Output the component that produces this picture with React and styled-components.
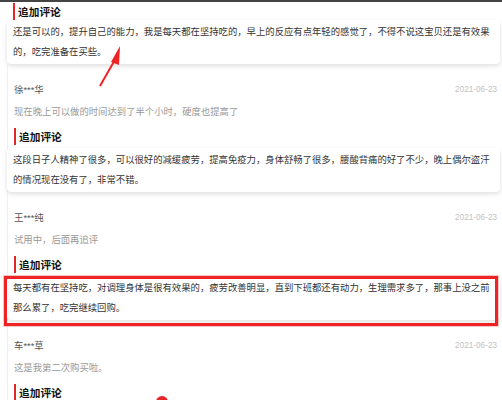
import React from 'react'
import styled, { createGlobalStyle } from 'styled-components'

const GlobalStyle = createGlobalStyle`
  html, body {
    margin: 0;
    padding: 0;
    background: #fff;
  }
  body {
    font-family: "Liberation Sans", "Noto Sans CJK SC", sans-serif;
  }
`

const reviews = [
  {
    name: '徐***华',
    date: '2021-06-23',
    text: '现在晚上可以做的时间达到了半个小时，硬度也提高了',
    extra: '这段日子人精神了很多，可以很好的减缓疲劳，提高免疫力，身体舒畅了很多，腰酸背痛的好了不少，晚上偶尔盗汗的情况现在没有了，非常不错。',
  },
  {
    name: '王***纯',
    date: '2021-06-23',
    text: '试用中，后面再追评',
    extra: '每天都有在坚持吃，对调理身体是很有效果的，疲劳改善明显，直到下班都还有动力，生理需求多了，那事上没之前那么累了，吃完继续回购。',
    marked: true,
  },
  {
    name: '车***草',
    date: '2021-06-23',
    text: '这是我第二次购买啦。',
    extra: '',
  },
]

const Page = styled.div`
  position: relative;
  width: 502px;
  height: 400px;
  overflow: hidden;
  background: #fff;
`

const TopBar = styled.div`
  height: 2px;
  background: #444;
`

const Item = styled.div`
  margin: 0 2px 0 7px;
  padding: ${p => (p.$first ? '0' : '14px 0 0')};
  border-left: ${p => (p.$first ? 'none' : '1px solid #efefef')};
`

const NameRow = styled.div`
  display: flex;
  justify-content: space-between;
  align-items: center;
  height: 22px;
  padding: 0 3px 0 6px;
`

const Name = styled.span`
  font-size: 9.4px;
  color: #555;
`

const Date = styled.span`
  font-family: "Liberation Sans", sans-serif;
  font-size: 8.2px;
  color: #c2c2c2;
`

const Comment = styled.div`
  font-size: 9.35px;
  line-height: 24px;
  color: #999;
  padding-left: 6px;
`

const Heading = styled.div`
  display: flex;
  align-items: center;
  height: ${p => (p.$first ? '18px' : '24px')};
  padding-left: 6px;
  font-size: 10.7px;
  font-weight: bold;
  color: #111;

  &::before {
    content: '';
    width: 2px;
    height: 17px;
    background: #e3262b;
    margin-right: 3px;
  }
`

const Card = styled.div`
  background: #fff;
  border-radius: 4px;
  box-shadow: 0 2px 5px rgba(0, 0, 0, 0.13);
  padding: 2px 5px 2px 6px;
  margin-left: ${p => (p.$first ? '0' : '-1px')};
  font-size: 9.35px;
  line-height: 20px;
  color: #333;
`

const MarkBox = styled.div`
  position: absolute;
  left: 4px;
  top: 276px;
  width: 488px;
  height: 44px;
  border: 3px solid #ee2424;
  box-shadow: 0 0 0 1px rgba(238, 36, 36, 0.25);
  pointer-events: none;
`

const Arrow = styled.svg`
  position: absolute;
  left: 92px;
  top: 40px;
  pointer-events: none;
`

const Dot = styled.div`
  position: absolute;
  left: 156px;
  top: 396px;
  width: 12px;
  height: 12px;
  border-radius: 50%;
  background: #e8262b;
`

export default function App() {
  return (
    <Page>
      <GlobalStyle />
      <TopBar />
      <Item $first>
        <Heading $first>追加评论</Heading>
        <Card $first>
          还是可以的，提升自己的能力，我是每天都在坚持吃的，早上的反应有点年轻的感觉了，不得不说这宝贝还是有效果的，吃完准备在买些。
        </Card>
      </Item>
      {reviews.map(r => (
        <Item key={r.name}>
          <NameRow>
            <Name>{r.name}</Name>
            <Date>{r.date}</Date>
          </NameRow>
          <Comment>{r.text}</Comment>
          <Heading>追加评论</Heading>
          {r.extra && <Card>{r.extra}</Card>}
        </Item>
      ))}
      <MarkBox />
      <Arrow width="40" height="52" viewBox="0 0 40 52">
        <line x1="8" y1="46" x2="24" y2="18" stroke="#ee2424" strokeWidth="2" />
        <polygon points="28,6 19,22 27,25" fill="#ee2424" />
      </Arrow>
      <Dot />
    </Page>
  )
}
